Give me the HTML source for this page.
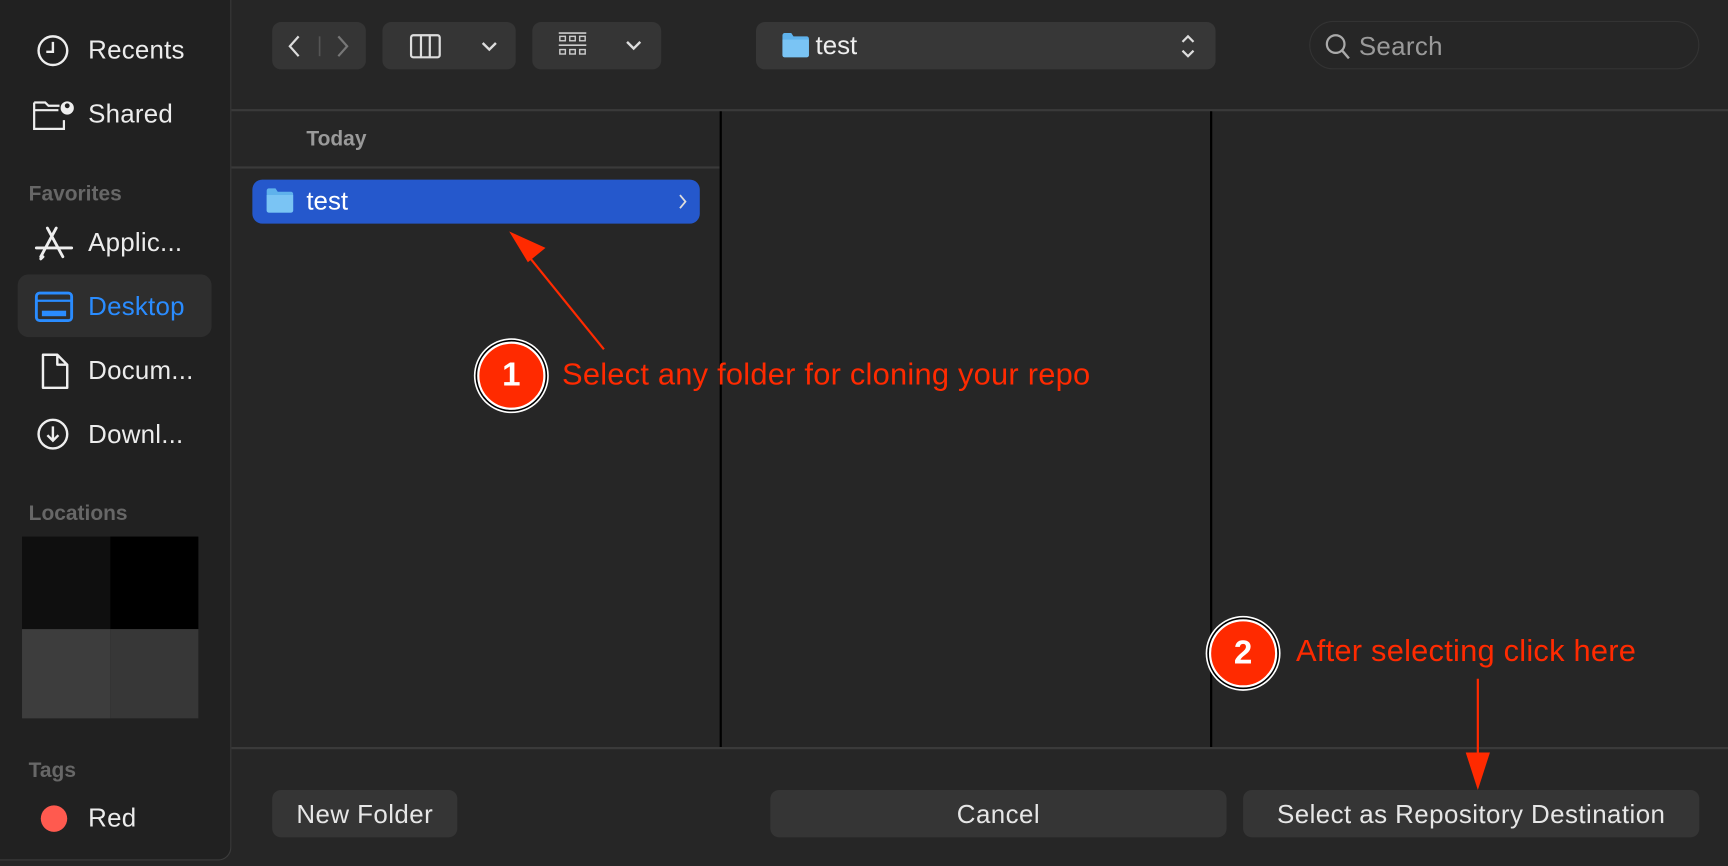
<!DOCTYPE html>
<html><head><meta charset="utf-8"><style>
html,body{margin:0;padding:0;width:1728px;height:866px;overflow:hidden;background:#262626;font-family:"Liberation Sans",sans-serif;}
#w{position:absolute;left:0;top:0;width:1568px;height:786px;transform:scale(1.10204,1.10178);transform-origin:0 0;background:#262626;}
.a{position:absolute;}
.side{left:0;top:0;width:209px;height:780px;background:#212121;border-right:1.5px solid #3c3c3c;border-bottom:1.5px solid #3c3c3c;border-bottom-right-radius:12px;}
.it{position:absolute;left:80px;font-size:23.5px;color:#ececec;letter-spacing:0.2px;}
.hd{position:absolute;left:26px;font-size:19px;color:#676767;font-weight:bold;}
.btn{position:absolute;background:#353535;border-radius:8px;}
.bt{position:absolute;text-align:center;font-size:23.5px;color:#e6e6e6;letter-spacing:0.4px;}
.ann{color:#ff2a00;font-size:28px;position:absolute;letter-spacing:0.2px;}
.circ{position:absolute;width:58px;height:58px;border-radius:50%;background:#ff2a00;border:2px solid #fff;box-shadow:0 0 0 1.5px #000,0 0 0 3px #fff;color:#fff;font-weight:bold;font-size:30px;text-align:center;line-height:58px;}
svg{position:absolute;overflow:visible}
</style></head><body><div id="w">
<div class="a side"></div>
<svg style="left:33px;top:31px" width="30" height="30" viewBox="0 0 30 30"><circle cx="15" cy="15" r="13" fill="none" stroke="#eee" stroke-width="2.2"/><path d="M15 7v9h-6" fill="none" stroke="#eee" stroke-width="2.2"/></svg>
<div class="it" style="top:32px">Recents</div>
<svg style="left:29px;top:89px" width="40" height="30" viewBox="0 0 40 30"><path d="M2 4h10l3 3h10M2 4v24h27v-8M2 11h22" fill="none" stroke="#eee" stroke-width="2"/><circle cx="32" cy="9" r="6" fill="#eee"/><circle cx="32" cy="7" r="2.2" fill="#212121"/></svg>
<div class="it" style="top:90px">Shared</div>
<div class="hd" style="top:166px">Favorites</div>
<svg style="left:31px;top:205px" width="36" height="30" viewBox="0 0 36 30"><path d="M12 2l14 26M20 2L6 28M2 20h32M8 28l-2 2" fill="none" stroke="#eee" stroke-width="2.6" stroke-linecap="round"/></svg>
<div class="it" style="top:207px">Applic...</div>
<div class="a" style="left:16px;top:249px;width:176px;height:57px;background:#2e2e2e;border-radius:10px"></div>
<svg style="left:31px;top:264px" width="36" height="30" viewBox="0 0 36 30"><rect x="2" y="2" width="32" height="25" rx="3" fill="none" stroke="#2a8cff" stroke-width="2.6"/><path d="M2 9h32" stroke="#2a8cff" stroke-width="2"/><rect x="7" y="18" width="22" height="5" fill="#2a8cff"/></svg>
<div class="it" style="top:265px;color:#2a8cff">Desktop</div>
<svg style="left:36px;top:320px" width="28" height="34" viewBox="0 0 28 34"><path d="M3 2h13l9 9v21H3z M16 2v9h9" fill="none" stroke="#eee" stroke-width="2.2" stroke-linejoin="round"/></svg>
<div class="it" style="top:323px">Docum...</div>
<svg style="left:33px;top:379px" width="30" height="30" viewBox="0 0 30 30"><circle cx="15" cy="15" r="13" fill="none" stroke="#eee" stroke-width="2.2"/><path d="M15 8v13M10 16l5 5 5-5" fill="none" stroke="#eee" stroke-width="2.2"/></svg>
<div class="it" style="top:381px">Downl...</div>
<div class="hd" style="top:456px">Locations</div>
<div class="a" style="left:20px;top:487px;width:80px;height:84px;background:#0f0f0f"></div>
<div class="a" style="left:100px;top:487px;width:80px;height:84px;background:#000"></div>
<div class="a" style="left:20px;top:571px;width:80px;height:81px;background:#3d3d3d"></div>
<div class="a" style="left:100px;top:571px;width:80px;height:81px;background:#373737"></div>
<div class="hd" style="top:689px">Tags</div>
<div class="a" style="left:37px;top:731px;width:24px;height:24px;border-radius:50%;background:#ff5a4f"></div>
<div class="it" style="top:729px">Red</div>

<div class="btn" style="left:247px;top:20px;width:85px;height:43px"></div>
<svg style="left:259px;top:31px" width="64" height="22" viewBox="0 0 64 22"><path d="M12 2L4 11l8 9" fill="none" stroke="#ddd" stroke-width="2"/><path d="M31 2v18" stroke="#555" stroke-width="1.5"/><path d="M48 2l8 9-8 9" fill="none" stroke="#777" stroke-width="2"/></svg>
<div class="btn" style="left:347px;top:20px;width:121px;height:43px"></div>
<svg style="left:372px;top:30px" width="86" height="24" viewBox="0 0 86 24"><rect x="1" y="2" width="26" height="20" rx="2" fill="none" stroke="#ddd" stroke-width="2"/><path d="M10 2v20M18 2v20" stroke="#ddd" stroke-width="2"/><path d="M66 9l6 6 6-6" fill="none" stroke="#ddd" stroke-width="2.2"/></svg>
<div class="btn" style="left:483px;top:20px;width:117px;height:43px"></div>
<svg style="left:507px;top:28px" width="80" height="28" viewBox="0 0 80 28"><path d="M0 2h25M0 13h25" stroke="#ccc" stroke-width="1.5"/><g fill="none" stroke="#ccc" stroke-width="1.3"><rect x="1" y="5" width="5" height="4"/><rect x="10" y="5" width="5" height="4"/><rect x="19" y="5" width="5" height="4"/><rect x="1" y="17" width="5" height="4"/><rect x="10" y="17" width="5" height="4"/><rect x="19" y="17" width="5" height="4"/></g><path d="M62 10l6 6 6-6" fill="none" stroke="#ddd" stroke-width="2.2"/></svg>
<div class="btn" style="left:686px;top:20px;width:417px;height:43px;background:#373737"></div>
<svg style="left:709px;top:29px" width="26" height="24" viewBox="0 0 26 24"><path d="M1 3a2 2 0 0 1 2-2h6l2 3h12a2 2 0 0 1 2 2v15a2 2 0 0 1-2 2H3a2 2 0 0 1-2-2z" fill="#5fb2ec"/><path d="M1 7h24v14a2 2 0 0 1-2 2H3a2 2 0 0 1-2-2z" fill="#7ac4f4"/></svg>
<div class="a" style="left:740px;top:28px;font-size:23.5px;color:#eee">test</div>
<svg style="left:1071px;top:30px" width="14" height="24" viewBox="0 0 14 24"><path d="M2 8l5-5 5 5M2 16l5 5 5-5" fill="none" stroke="#ddd" stroke-width="2"/></svg>
<div class="a" style="left:1188px;top:19px;width:354px;height:44px;border:1.5px solid #333;border-radius:22px;box-sizing:border-box"></div>
<svg style="left:1202px;top:30px" width="24" height="24" viewBox="0 0 24 24"><circle cx="10" cy="10" r="8" fill="none" stroke="#aaa" stroke-width="2"/><path d="M16 16l6 7" stroke="#aaa" stroke-width="2.2"/></svg>
<div class="a" style="left:1233px;top:29px;font-size:23.5px;color:#9a9a9a;letter-spacing:0.3px">Search</div>

<div class="a" style="left:210px;top:99px;width:1358px;height:2px;background:#3a3a3a"></div>
<div class="a" style="left:278px;top:116px;font-size:19px;color:#9a9a9a;font-weight:bold">Today</div>
<div class="a" style="left:210px;top:151px;width:443px;height:1.5px;background:#3a3a3a"></div>
<div class="a" style="left:653px;top:101px;width:2px;height:577px;background:#000"></div>
<div class="a" style="left:1098px;top:101px;width:2px;height:577px;background:#000"></div>
<div class="a" style="left:229px;top:163px;width:406px;height:40px;background:#2558cc;border-radius:9px"></div>
<svg style="left:241px;top:170px" width="26" height="24" viewBox="0 0 26 24"><path d="M1 3a2 2 0 0 1 2-2h6l2 3h12a2 2 0 0 1 2 2v15a2 2 0 0 1-2 2H3a2 2 0 0 1-2-2z" fill="#5fb2ec"/><path d="M1 7h24v14a2 2 0 0 1-2 2H3a2 2 0 0 1-2-2z" fill="#7ac4f4"/></svg>
<div class="a" style="left:278px;top:169px;font-size:23.5px;color:#fff">test</div>
<svg style="left:615px;top:175px" width="10" height="16" viewBox="0 0 10 16"><path d="M2 2l5 6-5 6" fill="none" stroke="#ddd" stroke-width="1.6"/></svg>

<div class="a" style="left:210px;top:678px;width:1358px;height:2px;background:#3a3a3a"></div>
<div class="btn" style="left:247px;top:717px;width:168px;height:43px"></div>
<div class="bt" style="left:247px;top:726px;width:168px">New Folder</div>
<div class="btn" style="left:699px;top:717px;width:414px;height:43px"></div>
<div class="bt" style="left:699px;top:726px;width:414px">Cancel</div>
<div class="btn" style="left:1128px;top:717px;width:414px;height:43px"></div>
<div class="bt" style="left:1128px;top:726px;width:414px">Select as Repository Destination</div>

<svg style="left:0;top:0" width="1568" height="786" viewBox="0 0 1568 786"><path d="M548 317L480 233" stroke="#ff2a00" stroke-width="2"/><path d="M462 210l33 15-16 13z" fill="#ff2a00"/><path d="M1341 616v68" stroke="#ff2a00" stroke-width="2"/><path d="M1330 683h22l-11 34z" fill="#ff2a00"/></svg>
<div class="circ" style="left:433px;top:310px">1</div>
<div class="ann" style="left:510px;top:324px">Select any folder for cloning your repo</div>
<div class="circ" style="left:1097px;top:562px">2</div>
<div class="ann" style="left:1176px;top:575px">After selecting click here</div>
</div></body></html>
